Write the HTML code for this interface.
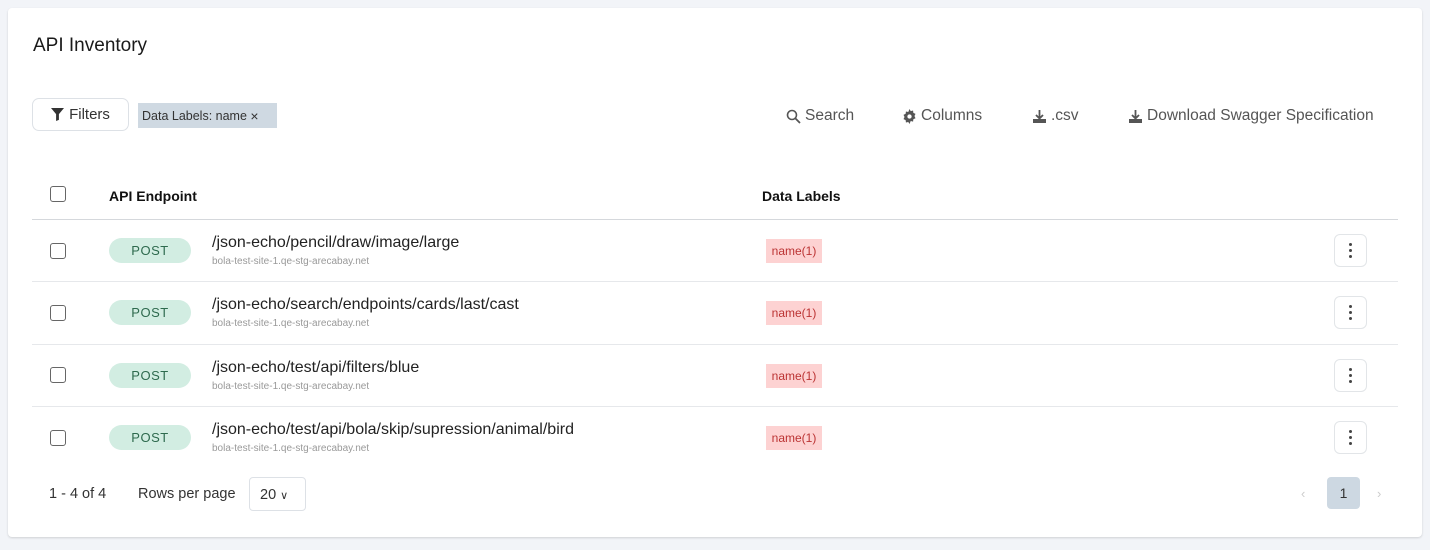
<!DOCTYPE html>
<html><head><style>
*{box-sizing:border-box;margin:0;padding:0}
body{width:1430px;height:550px;background:#f2f4f8;font-family:"Liberation Sans",sans-serif;color:#1f2328;position:relative;overflow:hidden}
.card{position:absolute;left:8px;top:8px;width:1414px;height:529px;background:#fff;border-radius:4px;box-shadow:0 1px 2px rgba(0,0,0,.15)}
.abs{position:absolute}
h1{position:absolute;left:25px;top:27px;font-size:19px;font-weight:400;color:#1a1a1a}
.filters{left:24px;top:90px;width:97px;height:33px;border:1px solid #dde1e6;border-radius:7px;font-size:15px;color:#333;display:flex;align-items:center;justify-content:center;gap:5px}
.chip{left:130px;top:95px;width:139px;height:25px;background:#cfd9e2;font-size:12.5px;color:#333;display:flex;align-items:center;padding-left:4px}
.tool{top:99px;font-size:15.5px;color:#555;display:flex;align-items:center;gap:4px}
.hdr{top:180px;font-size:14px;font-weight:700;color:#111}
.line{left:24px;width:1366px;height:1px;background:#e6e8eb}
.cb{width:16px;height:16px;border:1.5px solid #666;border-radius:3px;background:#fff}
.post{left:101px;width:82px;height:25px;border-radius:13px;background:#d2ede2;color:#2e6a4e;font-size:13px;display:flex;align-items:center;justify-content:center;letter-spacing:.5px}
.ep{left:204px;font-size:16px;color:#222}
.host{left:204px;font-size:10px;color:#999}
.lab{left:758px;width:56px;height:24px;background:#fdd2d2;color:#b33;font-size:12px;display:flex;align-items:center;justify-content:center}
.dots{left:1326px;width:33px;height:33px;border:1px solid #e2e5e8;border-radius:6px;display:flex;flex-direction:column;align-items:center;justify-content:center;gap:3px}
.dots i{width:3px;height:3px;border-radius:50%;background:#444;display:block}
</style></head><body>
<div class="card">
<h1>API Inventory</h1>
<div class="abs filters"><svg width="13" height="13" viewBox="0 0 12 12"><path d="M0 0h12L7.3 5.6V11L4.7 12V5.6z" fill="#333"/></svg>Filters</div>
<div class="abs chip">Data Labels: name&nbsp;<span style="font-size:14px">×</span></div>
<div class="abs tool" style="left:778px"><svg width="15" height="15" viewBox="0 0 15 15"><circle cx="6" cy="6" r="4.5" fill="none" stroke="#555" stroke-width="1.6"/><path d="M9.5 9.5L14 14" stroke="#555" stroke-width="1.8"/></svg>Search</div>
<div class="abs tool" style="left:894px"><svg width="15" height="15" viewBox="0 0 16 16"><path d="M8 0l1.3 2.2 2.5-.6.3 2.5 2.3 1.1-1.1 2.3 1.1 2.3-2.3 1.1-.3 2.5-2.5-.6L8 16l-1.3-2.2-2.5.6-.3-2.5-2.3-1.1L2.7 8.5 1.6 6.2l2.3-1.1.3-2.5 2.5.6z" fill="#555"/><circle cx="8" cy="8" r="2.3" fill="#fff"/></svg>Columns</div>
<div class="abs tool" style="left:1024px"><svg width="15" height="15" viewBox="0 0 15 15"><path d="M7.5 1v8M4 6l3.5 3.5L11 6" stroke="#555" stroke-width="1.8" fill="none"/><path d="M1 10v4h13v-4" fill="#555"/></svg>.csv</div>
<div class="abs tool" style="left:1120px"><svg width="15" height="15" viewBox="0 0 15 15"><path d="M7.5 1v8M4 6l3.5 3.5L11 6" stroke="#555" stroke-width="1.8" fill="none"/><path d="M1 10v4h13v-4" fill="#555"/></svg>Download Swagger Specification</div>
<div class="abs cb" style="left:42px;top:178px"></div>
<div class="abs hdr" style="left:101px">API Endpoint</div>
<div class="abs hdr" style="left:754px">Data Labels</div>
<div class="abs line" style="top:211px;background:#d5d8dc"></div>

<div class="abs cb" style="left:42px;top:235px"></div><div class="abs post" style="top:230px">POST</div><div class="abs ep" style="top:226px">/json-echo/pencil/draw/image/large</div><div class="abs host" style="top:248px">bola-test-site-1.qe-stg-arecabay.net</div><div class="abs lab" style="top:231px">name(1)</div><div class="abs dots" style="top:226px"><i></i><i></i><i></i></div>
<div class="abs line" style="top:273px"></div>
<div class="abs cb" style="left:42px;top:297px"></div><div class="abs post" style="top:292px">POST</div><div class="abs ep" style="top:288px">/json-echo/search/endpoints/cards/last/cast</div><div class="abs host" style="top:310px">bola-test-site-1.qe-stg-arecabay.net</div><div class="abs lab" style="top:293px">name(1)</div><div class="abs dots" style="top:288px"><i></i><i></i><i></i></div>
<div class="abs line" style="top:336px"></div>
<div class="abs cb" style="left:42px;top:359px"></div><div class="abs post" style="top:355px">POST</div><div class="abs ep" style="top:351px">/json-echo/test/api/filters/blue</div><div class="abs host" style="top:373px">bola-test-site-1.qe-stg-arecabay.net</div><div class="abs lab" style="top:356px">name(1)</div><div class="abs dots" style="top:351px"><i></i><i></i><i></i></div>
<div class="abs line" style="top:398px"></div>
<div class="abs cb" style="left:42px;top:422px"></div><div class="abs post" style="top:417px">POST</div><div class="abs ep" style="top:413px">/json-echo/test/api/bola/skip/supression/animal/bird</div><div class="abs host" style="top:435px">bola-test-site-1.qe-stg-arecabay.net</div><div class="abs lab" style="top:418px">name(1)</div><div class="abs dots" style="top:413px"><i></i><i></i><i></i></div>

<div class="abs" style="left:41px;top:478px;font-size:14.5px;color:#333">1 - 4 of 4</div>
<div class="abs" style="left:130px;top:478px;font-size:14.5px;color:#333">Rows per page</div>
<div class="abs" style="left:241px;top:469px;width:57px;height:34px;border:1px solid #dde1e6;border-radius:4px;font-size:14.5px;color:#333;padding:9px 0 0 10px">20 <span style="font-size:11px">∨</span></div>
<div class="abs" style="left:1293px;top:478px;font-size:13px;color:#ccc">‹</div>
<div class="abs" style="left:1319px;top:469px;width:33px;height:32px;background:#cdd8e2;border-radius:4px;font-size:14px;color:#333;text-align:center;line-height:32px">1</div>
<div class="abs" style="left:1369px;top:478px;font-size:13px;color:#ccc">›</div>
</div>
</body></html>
